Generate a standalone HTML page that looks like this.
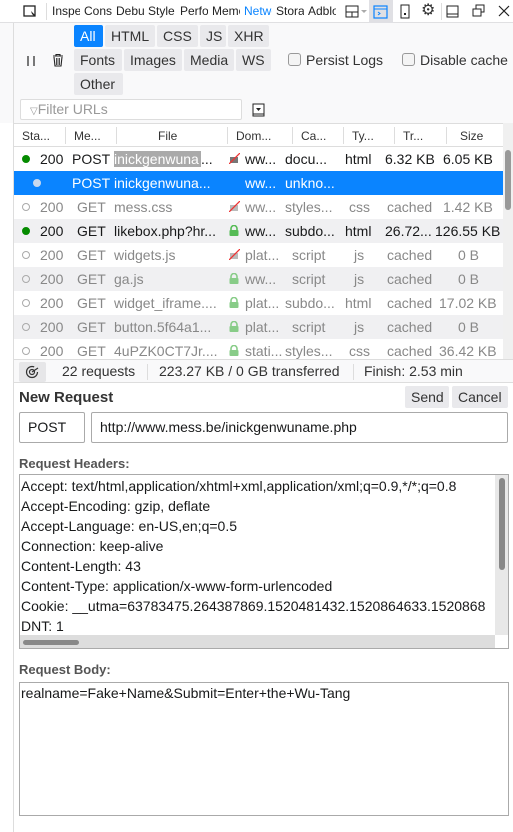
<!DOCTYPE html>
<html><head><meta charset="utf-8"><style>
*{box-sizing:border-box;margin:0;padding:0}
body{width:513px;height:832px;overflow:hidden;background:#fff;font-family:"Liberation Sans",sans-serif;font-size:13px;color:#18191a;position:relative}
.a{position:absolute;white-space:nowrap}
.tb{position:absolute;left:0;top:0;width:513px;height:23px;background:#fff;border-bottom:1px solid #e0e0e2}
.tab{position:absolute;top:4px;font-size:12px;color:#222;overflow:hidden;white-space:nowrap}
.pn{position:absolute;left:0;top:23px;width:513px;height:100px;background:#f9f9fa}
.btn{position:absolute;background:#e9e9ec;color:#333;height:22px;line-height:22px;padding:0 6px;font-size:14px;border-radius:2px}
.cb{position:absolute;width:13px;height:13px;border:1px solid #999;border-radius:3px;background:#f4f4f4}
.row{position:absolute;left:14px;width:489px;height:24px;font-size:14px;color:#888}
.row span{position:absolute;top:4px;white-space:nowrap}
.dot{position:absolute;left:8px;top:8px;width:8px;height:8px;border-radius:50%;border:1.5px solid #aaa}
.lock{position:absolute;left:215px;top:6px;width:10px;height:11px}
</style></head><body>
<svg width="0" height="0" style="position:absolute"><defs>
<symbol id="lk" viewBox="0 0 10 11"><path d="M2 5V3.5a3 3 0 016 0V5" fill="none" stroke="currentColor" stroke-width="1.6"/><rect x="0.5" y="5" width="9" height="6" rx="1" fill="currentColor"/></symbol>
<symbol id="ul" viewBox="0 0 11 11"><rect x="1" y="4" width="8" height="6" fill="currentColor"/><path d="M0 11L11 0" stroke="#e33" stroke-width="1.3"/></symbol>
</defs></svg>
<div class="tb">
<svg class="a" style="left:23px;top:5px" width="14" height="13"><rect x="1" y="1" width="11" height="10" fill="none" stroke="#222" stroke-width="1.3"/><path d="M8 6l4 4-1 1-2-2z" fill="#222"/></svg>
<div style="position:absolute;left:46px;top:3px;width:1px;height:17px;background:#ddd"></div>
<span class="tab" style="left:52px;width:28px">Inspector</span><span class="tab" style="left:84px;width:28px">Console</span><span class="tab" style="left:116px;width:28px">Debugger</span><span class="tab" style="left:148px;width:29px">Style Editor</span><span class="tab" style="left:180px;width:28px">Performance</span><span class="tab" style="left:212px;width:28px">Memory</span><span class="tab" style="left:244px;width:28px;color:#0a84ff">Network</span><span class="tab" style="left:276px;width:28px">Storage</span><span class="tab" style="left:308px;width:28px">Adblock</span>
<svg class="a" style="left:345px;top:5px" width="22" height="13"><rect x="1" y="1" width="12" height="11" fill="none" stroke="#222"/><path d="M1 7h12M7 7v5" stroke="#222"/><path d="M16 5l3 3 3-3z" fill="#aaa"/></svg>
<div style="position:absolute;left:369px;top:0;width:24px;height:23px;background:#e0e0e4"></div>
<svg class="a" style="left:373px;top:5px" width="16" height="14"><rect x="1" y="1" width="13" height="12" fill="none" stroke="#0a84ff" stroke-width="1.2"/><path d="M1 4h13M5 7l2 1.5-2 1.5" fill="none" stroke="#0a84ff"/></svg>
<svg class="a" style="left:400px;top:4px" width="11" height="15"><rect x="1" y="1" width="8" height="13" fill="none" stroke="#222"/><rect x="4" y="9" width="2" height="2" fill="#222"/></svg>
<span class="a" style="left:421px;top:0px;font-size:16px;color:#333">⚙</span>
<div style="position:absolute;left:441px;top:3px;width:1px;height:17px;background:#ddd"></div>
<svg class="a" style="left:446px;top:5px" width="13" height="13"><rect x="1" y="1" width="11" height="11" fill="none" stroke="#222"/><path d="M1 9h11" stroke="#222"/></svg>
<svg class="a" style="left:472px;top:4px" width="13" height="13"><rect x="4" y="1" width="8" height="7" fill="none" stroke="#222"/><rect x="1" y="5" width="8" height="7" fill="#fff" stroke="#222"/></svg>
<svg class="a" style="left:498px;top:5px" width="12" height="12"><path d="M1 1l10 10M11 1L1 11" stroke="#222" stroke-width="1.2"/></svg>
</div>
<div class="pn"></div>
<div style="position:absolute;left:13px;top:23px;width:1px;height:809px;background:#ddd"></div>
<svg class="a" style="left:25px;top:55px" width="12" height="12"><path d="M3 1v10M9 1v10" stroke="#222" stroke-width="1.2"/></svg>
<svg class="a" style="left:52px;top:53px" width="12" height="14"><path d="M1 3h10M4 3V1.5h4V3" fill="none" stroke="#222" stroke-width="1.1"/><path d="M2 4l1 9h6l1-9" fill="none" stroke="#222" stroke-width="1.1"/><path d="M4.5 5v7M6 5v7M7.5 5v7" stroke="#222" stroke-width="0.8"/></svg>
<div class="btn" style="left:74px;top:25px;background:#0a84ff;color:#fff;width:29px">All</div>
<div class="btn" style="left:105px;top:25px;width:50px">HTML</div>
<div class="btn" style="left:157px;top:25px;width:41px">CSS</div>
<div class="btn" style="left:200px;top:25px;width:26px">JS</div>
<div class="btn" style="left:228px;top:25px;width:41px">XHR</div>
<div class="btn" style="left:74px;top:49px;width:48px">Fonts</div>
<div class="btn" style="left:124px;top:49px;width:58px">Images</div>
<div class="btn" style="left:184px;top:49px;width:50px">Media</div>
<div class="btn" style="left:236px;top:49px;width:35px">WS</div>
<div class="btn" style="left:74px;top:73px;width:49px">Other</div>
<div class="cb" style="left:288px;top:53px"></div><span class="a" style="left:306px;top:52px;font-size:14px;color:#333">Persist Logs</span>
<div class="cb" style="left:402px;top:53px"></div><span class="a" style="left:420px;top:52px;font-size:14px;color:#333">Disable cache</span>
<div style="position:absolute;left:20px;top:99px;width:222px;height:21px;background:#fff;border:1px solid #ddd;border-radius:2px"></div>
<span class="a" style="left:30px;top:101px;font-size:14px;color:#999"><span style="font-size:10px">▽</span>Filter URLs</span>
<svg class="a" style="left:252px;top:103px" width="13" height="15"><rect x="1" y="1" width="11" height="12" fill="#fff" stroke="#222"/><path d="M4 5h5l-2.5 3z" fill="#222"/><path d="M1 11h11" stroke="#222"/></svg>
<div style="position:absolute;left:14px;top:123px;width:489px;height:24px;background:#fff;border-top:1px solid #ddd;border-bottom:1px solid #ddd;font-size:12px;color:#333">
<span class="a" style="left:8px;top:5px">Sta...</span><span class="a" style="left:60px;top:5px">Me...</span><span class="a" style="left:144px;top:5px">File</span><span class="a" style="left:222px;top:5px">Dom...</span><span class="a" style="left:287px;top:5px">Ca...</span><span class="a" style="left:338px;top:5px">Ty...</span><span class="a" style="left:389px;top:5px">Tr...</span><span class="a" style="left:446px;top:5px">Size</span>
<div style="position:absolute;left:51px;top:3px;width:1px;height:17px;background:#ddd"></div><div style="position:absolute;left:102px;top:3px;width:1px;height:17px;background:#ddd"></div><div style="position:absolute;left:213px;top:3px;width:1px;height:17px;background:#ddd"></div><div style="position:absolute;left:278px;top:3px;width:1px;height:17px;background:#ddd"></div><div style="position:absolute;left:329px;top:3px;width:1px;height:17px;background:#ddd"></div><div style="position:absolute;left:380px;top:3px;width:1px;height:17px;background:#ddd"></div><div style="position:absolute;left:432px;top:3px;width:1px;height:17px;background:#ddd"></div>
</div>
<div style="position:absolute;left:503px;top:123px;width:10px;height:236px;background:#f0f0f0"></div>
<div style="position:absolute;left:505px;top:150px;width:6px;height:60px;background:#999;border-radius:3px"></div>

<div class="row" style="top:147px;color:#18191a"><div class="dot" style="background:#058b00;border-color:#058b00"></div><span style="left:26px">200</span><span style="left:58px">POST</span><span style="left:100px;background:#aaa;color:#fff;width:87px;overflow:hidden">inickgenwuna</span><span style="left:187px">...</span><svg class="lock" style="color:#777;width:11px"><use href="#ul"/></svg><span style="left:231px">ww...</span><span style="left:271px">docu...</span><span style="left:331px">html</span><span style="left:371px">6.32 KB</span><span style="left:429px">6.05 KB</span></div>
<div class="row" style="top:171px;background:#0a84ff;color:#fff"><div class="dot" style="left:19px;background:#c8d8ee;border-color:#c8d8ee"></div><span style="left:58px">POST</span><span style="left:100px">inickgenwuna...</span><span style="left:231px">ww...</span><span style="left:271px">unkno...</span></div>
<div class="row" style="top:195px"><div class="dot"></div><span style="left:26px">200</span><span style="left:63px">GET</span><span style="left:100px">mess.css</span><svg class="lock" style="color:#bbb;width:11px"><use href="#ul"/></svg><span style="left:231px">ww...</span><span style="left:271px">styles...</span><span style="left:335px">css</span><span style="left:373px">cached</span><span style="left:429px">1.42 KB</span></div>
<div class="row" style="top:219px;background:#f0f0f2;color:#18191a"><div class="dot" style="background:#058b00;border-color:#058b00"></div><span style="left:26px">200</span><span style="left:63px">GET</span><span style="left:100px">likebox.php?hr...</span><svg class="lock" style="color:#5b5"><use href="#lk"/></svg><span style="left:231px">ww...</span><span style="left:271px">subdo...</span><span style="left:331px">html</span><span style="left:371px">26.72...</span><span style="left:421px">126.55 KB</span></div>
<div class="row" style="top:243px"><div class="dot"></div><span style="left:26px">200</span><span style="left:63px">GET</span><span style="left:100px">widgets.js</span><svg class="lock" style="color:#bbb;width:11px"><use href="#ul"/></svg><span style="left:231px">plat...</span><span style="left:278px">script</span><span style="left:340px">js</span><span style="left:373px">cached</span><span style="left:444px">0 B</span></div>
<div class="row" style="top:267px;background:#f0f0f2"><div class="dot"></div><span style="left:26px">200</span><span style="left:63px">GET</span><span style="left:100px">ga.js</span><svg class="lock" style="color:#8c8"><use href="#lk"/></svg><span style="left:231px">ww...</span><span style="left:278px">script</span><span style="left:340px">js</span><span style="left:373px">cached</span><span style="left:444px">0 B</span></div>
<div class="row" style="top:291px"><div class="dot"></div><span style="left:26px">200</span><span style="left:63px">GET</span><span style="left:100px">widget_iframe....</span><svg class="lock" style="color:#8c8"><use href="#lk"/></svg><span style="left:231px">plat...</span><span style="left:271px">subdo...</span><span style="left:331px">html</span><span style="left:373px">cached</span><span style="left:425px">17.02 KB</span></div>
<div class="row" style="top:315px;background:#f0f0f2"><div class="dot"></div><span style="left:26px">200</span><span style="left:63px">GET</span><span style="left:100px">button.5f64a1...</span><svg class="lock" style="color:#8c8"><use href="#lk"/></svg><span style="left:231px">plat...</span><span style="left:278px">script</span><span style="left:340px">js</span><span style="left:373px">cached</span><span style="left:444px">0 B</span></div>
<div class="row" style="top:339px;height:20px;overflow:hidden"><div class="dot"></div><span style="left:26px">200</span><span style="left:63px">GET</span><span style="left:100px">4uPZK0CT7Jr....</span><svg class="lock" style="color:#8c8"><use href="#lk"/></svg><span style="left:231px">stati...</span><span style="left:271px">styles...</span><span style="left:335px">css</span><span style="left:373px">cached</span><span style="left:425px">36.42 KB</span></div>
<div style="position:absolute;left:14px;top:359px;width:499px;height:24px;background:#f9f9fa;border-top:1px solid #ddd;border-bottom:1px solid #ddd;font-size:14px;color:#333">
<div style="position:absolute;left:5px;top:2px;width:27px;height:20px;background:#e6e6e8;border-radius:2px"></div>
<svg class="a" style="left:11px;top:5px" width="14" height="14"><circle cx="7" cy="7" r="5.5" fill="none" stroke="#333" stroke-width="1.2" stroke-dasharray="28 7"/><circle cx="7" cy="7" r="2.5" fill="none" stroke="#333" stroke-width="1.2"/><path d="M7 7l6-4" stroke="#333" stroke-width="1.2"/></svg>
<span class="a" style="left:48px;top:3px">22 requests</span><div style="position:absolute;left:133px;top:4px;width:1px;height:16px;background:#ddd"></div>
<span class="a" style="left:145px;top:3px">223.27 KB / 0 GB transferred</span><div style="position:absolute;left:339px;top:4px;width:1px;height:16px;background:#ddd"></div>
<span class="a" style="left:350px;top:3px">Finish: 2.53 min</span></div>
<span class="a" style="left:19px;top:389px;font-size:15px;font-weight:bold;color:#333">New Request</span>
<div class="btn" style="left:405px;top:386px;width:44px;font-size:14px">Send</div>
<div class="btn" style="left:452px;top:386px;width:56px;font-size:14px">Cancel</div>
<div style="position:absolute;left:19px;top:412px;width:66px;height:31px;border:1px solid #aaa;border-radius:2px;padding:6px 8px;font-size:14px">POST</div>
<div style="position:absolute;left:91px;top:412px;width:417px;height:31px;border:1px solid #aaa;border-radius:2px;padding:6px 8px;font-size:14px">http://www.mess.be/inickgenwuname.php</div>
<span class="a" style="left:19px;top:456px;font-size:13px;font-weight:bold;color:#555">Request Headers:</span>
<div style="position:absolute;left:19px;top:474px;width:490px;height:175px;border:1px solid #aaa;overflow:hidden;font-size:14px;line-height:20px">
<div style="position:absolute;left:1px;top:1px;width:470px;overflow:hidden;white-space:nowrap">Accept: text/html,application/xhtml+xml,application/xml;q=0.9,*/*;q=0.8<br>Accept-Encoding: gzip, deflate<br>Accept-Language: en-US,en;q=0.5<br>Connection: keep-alive<br>Content-Length: 43<br>Content-Type: application/x-www-form-urlencoded<br>Cookie: __utma=63783475.264387869.1520481432.1520864633.1520868<br>DNT: 1</div>
<div style="position:absolute;left:475px;top:0;width:14px;height:160px;background:#e8e8e8"></div>
<div style="position:absolute;left:479px;top:3px;width:6px;height:92px;background:#888;border-radius:3px"></div>
<div style="position:absolute;left:0;top:160px;width:475px;height:14px;background:#ddd"></div>
<div style="position:absolute;left:3px;top:165px;width:56px;height:5px;background:#888;border-radius:3px"></div>
</div>
<span class="a" style="left:19px;top:662px;font-size:13px;font-weight:bold;color:#555">Request Body:</span>
<div style="position:absolute;left:19px;top:682px;width:490px;height:134px;border:1px solid #aaa;font-size:14px;padding:0 1px;line-height:20px">realname=Fake+Name&amp;Submit=Enter+the+Wu-Tang</div>
</body></html>
